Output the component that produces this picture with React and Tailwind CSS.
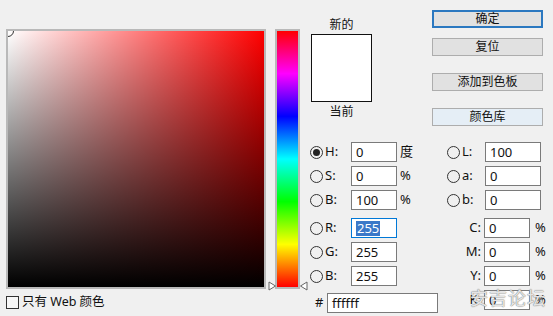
import React from "react";

const font = { fontFamily: '"Noto Sans", "Noto Sans CJK SC", sans-serif' };

function Radio({ checked }) {
  return (
    <div className="w-[13px] h-[13px] rounded-full border border-[#333] bg-[#f0f0f0] flex items-center justify-center shrink-0">
      {checked ? <div className="w-[7px] h-[7px] rounded-full bg-[#222]" /> : null}
    </div>
  );
}

function Field({ value, w, focused }) {
  return (
    <div
      className={`h-[20px] ${w} bg-white border ${focused ? "border-[#0078d7]" : "border-[#7a7a7a]"} flex items-center pl-[4px] text-[13px] leading-none text-[#111]`}
    >
      {focused ? (
        <span className="bg-[#3b78c8] text-white px-[1px] leading-[15px]">{value}</span>
      ) : (
        <span>{value}</span>
      )}
    </div>
  );
}

function LeftRow({ label, value, unit, checked, focused }) {
  return (
    <div className="flex items-center h-[20px]">
      <Radio checked={checked} />
      <span className="ml-[2px] w-[26px] text-[13px] text-[#111]">{label}</span>
      <Field value={value} w="w-[46px]" focused={focused} />
      <span className="ml-[3px] text-[13px] text-[#111]">{unit}</span>
    </div>
  );
}

function LabRow({ label, value }) {
  return (
    <div className="flex items-center h-[20px]">
      <Radio />
      <span className="ml-[2px] w-[23px] text-[13px] text-[#111]">{label}</span>
      <Field value={value} w="w-[56px]" />
    </div>
  );
}

function CmykRow({ label, value }) {
  return (
    <div className="flex items-center h-[20px]">
      <span className="w-[37px] pr-[3px] text-right text-[13px] text-[#111]">{label}</span>
      <Field value={value} w="w-[46px]" />
      <span className="ml-[5px] text-[13px] text-[#111]">%</span>
    </div>
  );
}

function Button({ children, primary, lib, mt }) {
  return (
    <div
      className={`${mt} h-[18px] w-[111px] flex items-center justify-center text-[12px] text-[#111] ${
        primary
          ? "border-2 border-[#2b78c0] bg-[#e1e1e1]"
          : lib
          ? "border border-[#adadad] bg-[#e5eef6]"
          : "border border-[#adadad] bg-[#e1e1e1]"
      }`}
    >
      {children}
    </div>
  );
}

function Arrow({ dir }) {
  return (
    <svg width="9" height="10" viewBox="0 0 9 10">
      {dir === "right" ? (
        <path d="M1 1 L7.5 5 L1 9 Z" fill="#fff" stroke="#666" strokeWidth="1" />
      ) : (
        <path d="M8 1 L1.5 5 L8 9 Z" fill="#fff" stroke="#666" strokeWidth="1" />
      )}
    </svg>
  );
}

export default function App() {
  return (
    <div className="relative w-[553px] h-[316px] bg-[#f0f0f0] flex overflow-hidden select-none" style={font}>
      {/* colour field */}
      <div className="pl-[6px] pt-[29px] flex flex-col">
        <div className="relative w-[260px] h-[260px] border-2 border-[#b9b9b9] overflow-hidden">
          <div className="absolute inset-0 bg-[linear-gradient(to_right,#ffffff,#ff0000)]" />
          <div className="absolute inset-0 bg-[linear-gradient(to_bottom,rgba(0,0,0,0),#000000)]" />
          <div className="absolute -left-[6px] -top-[6px] w-[12px] h-[12px] rounded-full border border-[#333]" />
        </div>
        <div className="mt-[6px] flex items-center h-[14px]">
          <div className="w-[13px] h-[13px] border border-[#333] bg-[#f7f7f7]" />
          <span className="ml-[3px] text-[12.5px] text-[#111]">只有 Web 颜色</span>
        </div>
      </div>

      {/* hue slider */}
      <div className="ml-[2px] pt-[29px] relative w-[40px]">
        <div className="ml-[7px] w-[25px] h-[260px] border-2 border-[#b9b9b9] bg-[linear-gradient(to_bottom,#ff0000,#ff00ff,#0000ff,#00ffff,#00ff00,#ffff00,#ff0000)]" />
        <div className="absolute left-0 top-[281px]">
          <Arrow dir="right" />
        </div>
        <div className="absolute left-[31px] top-[281px]">
          <Arrow dir="left" />
        </div>
      </div>

      {/* right panel */}
      <div className="flex flex-col w-[245px]">
        <div className="flex h-[142px]">
          <div className="ml-[3px] w-[61px] flex flex-col pt-[16px]">
            <div className="h-[17px] text-center text-[12px] leading-[17px] text-[#111]">新的</div>
            <div className="mt-[1px] h-[68px] border border-[#111] bg-white" />
            <div className="mt-[1px] h-[17px] text-center text-[12px] leading-[17px] text-[#111]">当前</div>
          </div>
          <div className="ml-[60px] flex flex-col pt-[10px]">
            <Button primary mt="">确定</Button>
            <Button mt="mt-[10px]">复位</Button>
            <Button mt="mt-[17px]">添加到色板</Button>
            <Button lib mt="mt-[17px]">颜色库</Button>
          </div>
        </div>

        <div className="flex ml-[2px]">
          <div className="w-[137px] flex flex-col">
            <div className="flex flex-col gap-[4px]">
              <LeftRow label="H:" value="0" unit="度" checked />
              <LeftRow label="S:" value="0" unit="%" />
              <LeftRow label="B:" value="100" unit="%" />
            </div>
            <div className="mt-[8px] flex flex-col gap-[4px]">
              <LeftRow label="R:" value="255" focused />
              <LeftRow label="G:" value="255" />
              <LeftRow label="B:" value="255" />
            </div>
            <div className="mt-[7px] flex items-center h-[20px]">
              <span className="ml-[5px] w-[12px] text-[13px] text-[#111]">#</span>
              <Field value="ffffff" w="w-[111px]" />
            </div>
          </div>
          <div className="flex flex-col">
            <div className="flex flex-col gap-[4px]">
              <LabRow label="L:" value="100" />
              <LabRow label="a:" value="0" />
              <LabRow label="b:" value="0" />
            </div>
            <div className="mt-[8px] flex flex-col gap-[4px]">
              <CmykRow label="C:" value="0" />
              <CmykRow label="M:" value="0" />
              <CmykRow label="Y:" value="0" />
              <CmykRow label="K:" value="0" />
            </div>
          </div>
        </div>
      </div>

      {/* watermark */}
      <div className="absolute left-[470px] top-[285px] text-[18px] tracking-[1px] text-white/80 [text-shadow:0_0_1px_#777,0_0_1px_#777] pointer-events-none">
        安吉论坛
      </div>
    </div>
  );
}
